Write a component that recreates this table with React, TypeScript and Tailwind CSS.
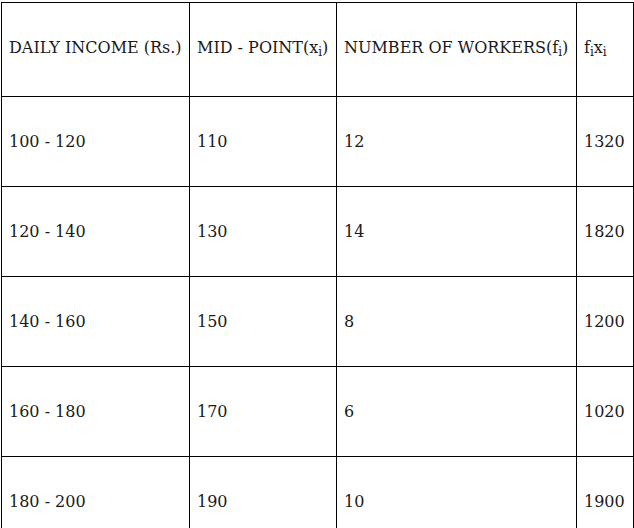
const rows = [
  ['100 - 120', '110', '12', '1320'],
  ['120 - 140', '130', '14', '1820'],
  ['140 - 160', '150', '8', '1200'],
  ['160 - 180', '170', '6', '1020'],
  ['180 - 200', '190', '10', '1900'],
];

const cell = 'border border-black px-[7px] text-left align-middle font-normal';

function Sub({ children }: { children: string }) {
  return <sub className="text-[12px] leading-none">{children}</sub>;
}

export default function App() {
  return (
    <div className="pl-px pt-[2px] bg-white text-[16px] text-[#1a1a1a] font-['DejaVu_Serif',serif]">
      <table className="table-fixed border-collapse w-[632px]">
        <colgroup>
          <col className="w-[188px]" />
          <col className="w-[147px]" />
          <col className="w-[240px]" />
          <col className="w-[57px]" />
        </colgroup>
        <thead>
          <tr className="h-[94px]">
            <th className={`${cell} pb-[4px]`}>DAILY INCOME (Rs.)</th>
            <th className={`${cell} pb-[4px]`}>
              MID - POINT(x<Sub>i</Sub>)
            </th>
            <th className={`${cell} pb-[4px]`}>
              NUMBER OF WORKERS(f<Sub>i</Sub>)
            </th>
            <th className={`${cell} pb-[4px]`}>
              f<Sub>i</Sub>x<Sub>i</Sub>
            </th>
          </tr>
        </thead>
        <tbody>
          {rows.map((r) => (
            <tr key={r[0]} className="h-[90px]">
              {r.map((v, i) => (
                <td key={i} className={cell}>
                  {v}
                </td>
              ))}
            </tr>
          ))}
        </tbody>
      </table>
    </div>
  );
}
